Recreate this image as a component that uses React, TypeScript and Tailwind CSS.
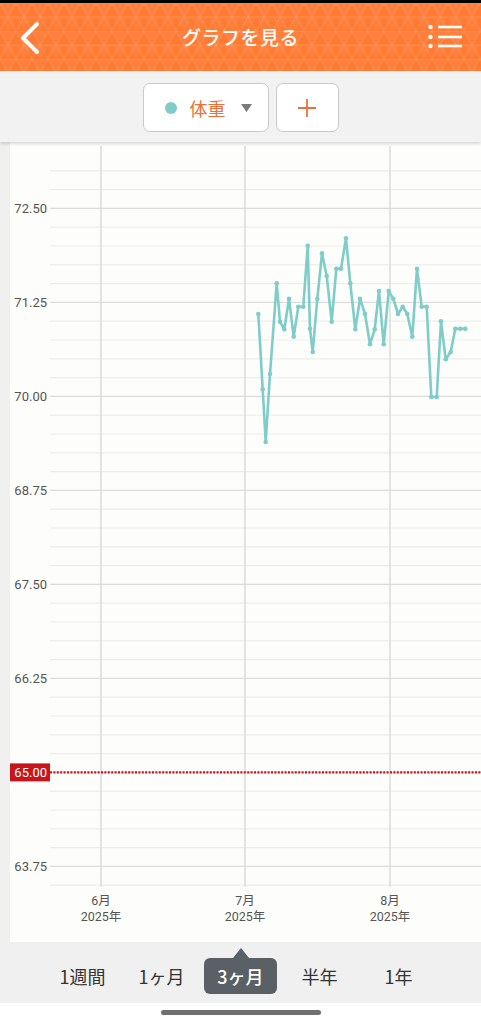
import React from 'react';

const FONT = { fontFamily: "'Noto Sans CJK JP', 'Noto Sans', sans-serif" };
const NUM_FONT = "Roboto, 'Noto Sans CJK JP', sans-serif";

// weight log, in page pixels (x, y)
const points: [number, number][] = [
    [258.3, 314], [262.7, 389.3], [265.7, 442], [270, 374], [276.7, 283.3],
    [280, 321.7], [284.3, 329.3], [289, 298.7], [293.7, 336.7], [298.3, 306.7],
    [303.3, 306.7], [307.7, 245.7], [310, 328.7], [312.7, 352], [317.3, 299],
    [322, 253.3], [326.7, 276], [331.7, 321.7], [336.3, 268.7], [341, 268.7],
    [346, 238.3], [350.3, 283.3], [355.3, 329.3], [360, 298.7], [365, 314],
    [370, 344.3], [374.7, 329.3], [379, 291], [383.7, 344.3], [388.7, 291],
    [393.3, 298.7], [398, 314], [402.7, 306.7], [407.3, 314], [412.3, 336.7],
    [417, 268.7], [421.7, 306.7], [426.7, 306.7], [431.3, 397], [436.7, 397],
    [441, 321.3], [445.7, 359.3], [450.7, 352], [455.3, 328.7], [460.3, 328.7],
    [465.3, 328.7],
];

const yOf = (v: number) => 208.4 + (72.5 - v) * 75.2;

function HeaderPattern() {
    return (
        <svg className="absolute inset-0 w-full h-full" aria-hidden>
            <defs>
                <pattern id="tri" width="16" height="28" patternUnits="userSpaceOnUse">
                    <path d="M0 0 H16 M0 14 H16 M16 0 L0 28 M0 0 L16 28" stroke="rgba(255,255,255,0.13)" strokeWidth="1" fill="none" />
                    <path d="M0 0 L16 0 L8 14 Z" fill="rgba(255,255,255,0.04)" />
                    <path d="M0 14 L16 14 L8 28 Z" fill="rgba(255,255,255,0.04)" />
                </pattern>
            </defs>
            <rect width="100%" height="100%" fill="url(#tri)" />
        </svg>
    );
}

function Chart() {
    const lines = Array.from({ length: 39 }, (_, i) => 73 - 0.25 * i);
    const months = [
        { x: 101, m: '6月' },
        { x: 245, m: '7月' },
        { x: 390, m: '8月' },
    ];
    const labels = [72.5, 71.25, 70, 68.75, 67.5, 66.25, 63.75];
    const path = points.map(([x, y], i) => `${i ? 'L' : 'M'}${x} ${y}`).join(' ');

    return (
        <svg viewBox="10 142 471 800" width="471" height="800" className="block">
            <rect x="10" y="142" width="471" height="800" fill="#fdfdfb" />
            {lines.map((v, i) => (
                <line
                    key={i}
                    x1="50" x2="481" y1={yOf(v)} y2={yOf(v)}
                    stroke={i % 5 === 2 ? '#dcdcdc' : '#ededed'}
                    strokeWidth="1.2"
                />
            ))}
            {months.map(({ x }) => (
                <line key={x} x1={x} x2={x} y1="146" y2="887" stroke="#d8d8d8" strokeWidth="1.4" />
            ))}
            {labels.map(v => (
                <text key={v} x="47" y={yOf(v) + 4.5} textAnchor="end" fontSize="13" fill="#555" fontFamily={NUM_FONT}>
                    {v.toFixed(2)}
                </text>
            ))}
            {months.map(({ x, m }) => (
                <g key={m} fontSize="12.5" fill="#555" textAnchor="middle" fontFamily={NUM_FONT}>
                    <text x={x} y="905">{m}</text>
                    <text x={x} y="921">2025年</text>
                </g>
            ))}

            {/* target line */}
            <line x1="50" x2="481" y1={yOf(65)} y2={yOf(65)} stroke="#d0101c" strokeWidth="2.4" strokeDasharray="2 1.4" />
            <rect x="10" y={yOf(65) - 9} width="40" height="18" fill="#c8151b" />
            <text x="47" y={yOf(65) + 4.5} textAnchor="end" fontSize="13" fill="#fff" fontFamily={NUM_FONT}>65.00</text>

            <path d={path} fill="none" stroke="#7fcdc8" strokeWidth="2.6" strokeLinejoin="round" />
            {points.map(([x, y], i) => (
                <circle key={i} cx={x} cy={y} r="2.3" fill="#7fcdc8" />
            ))}
        </svg>
    );
}

const tabs = ['1週間', '1ヶ月', '3ヶ月', '半年', '1年'];

export default function App() {
    return (
        <div className="w-[481px] h-[1024px] flex flex-col bg-white overflow-hidden" style={FONT}>
            <div className="h-[3px] bg-black" />

            <header className="relative h-[68px] bg-[#ff7b34] flex items-center justify-between">
                <HeaderPattern />
                <button className="relative w-[60px] h-full flex items-center justify-center">
                    <svg width="60" height="68" viewBox="0 0 60 68">
                        <path d="M37 21 L23 35 L37 49" stroke="#fff" strokeWidth="4" strokeLinecap="round" strokeLinejoin="round" fill="none" />
                    </svg>
                </button>
                <h1 className="relative text-white text-[19px] font-medium tracking-[0.5px]">グラフを見る</h1>
                <button className="relative w-[60px] h-full flex items-center justify-center">
                    <svg width="60" height="68" viewBox="420 0 60 68">
                        {[24, 34, 43].map(y => (
                            <g key={y}>
                                <circle cx="429.5" cy={y} r="2.2" fill="#fff" />
                                <line x1="437" x2="461" y1={y} y2={y} stroke="#fff" strokeWidth="2.6" />
                            </g>
                        ))}
                    </svg>
                </button>
            </header>

            <div className="relative z-10 h-[71px] bg-[#f2f2f2] flex items-center justify-center gap-[7px] pt-[2px] shadow-[0_2px_3px_rgba(0,0,0,0.14)]">
                <button className="w-[126px] h-[49px] bg-white border border-[#c9c9c9] rounded-[7px] flex items-center pl-[21px]">
                    <span className="w-[12px] h-[12px] rounded-full bg-[#7fcdc8]" />
                    <span className="ml-[13px] text-[18px] text-[#ea7238] leading-none">体重</span>
                    <svg className="ml-[15px]" width="11" height="8" viewBox="0 0 11 8">
                        <path d="M0 0 H11 L5.5 8 Z" fill="#7a7a7a" />
                    </svg>
                </button>
                <button className="w-[63px] h-[49px] bg-white border border-[#c9c9c9] rounded-[7px] flex items-center justify-center">
                    <svg width="20" height="20" viewBox="0 0 20 20">
                        <path d="M10 1 V19 M1 10 H19" stroke="#ea7238" strokeWidth="1.8" />
                    </svg>
                </button>
            </div>

            <div className="flex bg-[#f0f0f0] pl-[10px]">
                <Chart />
            </div>

            <nav className="h-[61px] bg-[#f0f0f0] flex justify-center pt-[16px]">
                {tabs.map(t => (
                    <div key={t} className="w-[79px] h-[36px] flex items-center justify-center">
                        {t === '3ヶ月' ? (
                            <span className="relative w-[73px] h-[36px] rounded-[6px] bg-[#596066] text-white text-[18px] font-medium flex items-center justify-center">
                                <span className="absolute left-1/2 -top-[10px] -translate-x-1/2 w-0 h-0 border-l-[8px] border-r-[8px] border-b-[10px] border-l-transparent border-r-transparent border-b-[#596066]" />
                                {t}
                            </span>
                        ) : (
                            <span className="text-[18px] text-[#333]">{t}</span>
                        )}
                    </div>
                ))}
            </nav>

            <div className="h-[21px] bg-white flex justify-center pt-[7px]">
                <div className="w-[160px] h-[5px] rounded-full bg-[#707070]" />
            </div>
        </div>
    );
}
